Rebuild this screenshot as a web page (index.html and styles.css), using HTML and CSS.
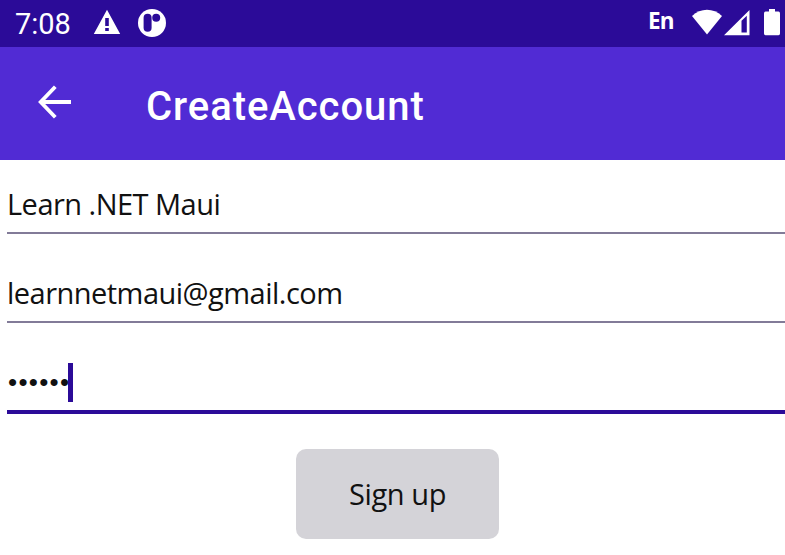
FILE: index.html
```html
<!DOCTYPE html>
<html lang="en">
<head>
<meta charset="utf-8">
<title>CreateAccount</title>
<link rel="stylesheet" href="styles.css">
</head>
<body>
<div class="status">
  <span class="clock">7:08</span>
  <svg class="warn" width="28" height="26" viewBox="0 0 28 26"><path fill="#fff" fill-rule="evenodd" d="M14 0.8 27.2 25H0.8ZM12.2 9V17h3.6V9ZM12.2 19v3h3.6v-3Z"/></svg>
  <svg class="app" width="28" height="28" viewBox="0 0 28 28"><circle cx="14" cy="14" r="14" fill="#fff"/><rect x="5.6" y="4.8" width="8" height="18" rx="4" fill="#2b0b98"/><circle cx="18.2" cy="8.7" r="4" fill="#2b0b98"/></svg>
  <span class="lang">En</span>
  <svg class="wifi" width="30" height="26" viewBox="0 0 30 26"><path fill="#fff" d="M0 7C8.500-1.500 21.500-1.500 30 7L15 25.500Z"/></svg>
  <svg class="signal" width="26" height="26" viewBox="0 0 26 26"><path fill="#fff" fill-rule="evenodd" d="M25.500 0V25.200H0ZM17.500 10.800V22.500H22.800V5.800Z"/></svg>
  <svg class="battery" width="16" height="27" viewBox="0 0 16 27"><path fill="#fff" d="M5 0h6v2.500h3.500Q16 2.500 16 4.500V24.500Q16 26.200 14.500 26.200H1.500Q0 26.200 0 24.500V4.500Q0 2.500 1.500 2.500H5Z"/></svg>
</div>
<header class="bar">
  <svg class="back" width="33" height="34" viewBox="0 0 33 34"><path fill="none" stroke="#fff" stroke-width="3.800" d="M17.300 1.800 2.700 17 17.300 32.200M2.700 17H33"/></svg>
  <h1 class="title">CreateAccount</h1>
</header>
<main class="form">
  <div class="field"><span class="name">Learn .NET Maui</span></div>
  <div class="field email"><span class="mail">learnnetmaui@gmail.com</span></div>
  <div class="field active"><span class="dots">••••••</span><span class="caret"></span></div>
  <button class="signup">Sign up</button>
</main>
</body>
</html>
```
FILE: styles.css
```css
* { box-sizing: border-box; }
body { margin: 0; background: #fff; width: 785px; height: 555px; overflow: hidden; font-family: "Open Sans", sans-serif; color: #111; }
svg { display: block; flex: none; }
.status { display: flex; align-items: flex-start; height: 47px; background: #2b0b98; color: #fff; font-family: Roboto, sans-serif; padding-left: 15px; }
.clock { width: 78px; font-size: 29px; line-height: 34px; margin-top: 7px; white-space: nowrap; }
.warn { margin-top: 9px; }
.app { margin: 9px 0 0 17px; }
.lang { margin: 6px 0 0 482px; width: 44px; font: 700 22.5px/30px "Open Sans", sans-serif; letter-spacing: -0.8px; }
.wifi { margin-top: 9px; }
.signal { margin: 10px 0 0 2px; }
.battery { margin: 9px 0 0 14px; }
.bar { display: flex; height: 113px; background: #512bd4; color: #fff; }
.back { margin: 38px 0 0 38px; }
.title { margin: 36px 0 0 75px; font: 500 40px/47px Roboto, sans-serif; letter-spacing: 0.95px; }
.form { padding-left: 7px; display: flex; flex-direction: column; }
.field { display: flex; height: 74px; border-bottom: 2px solid #827b98; font-size: 29px; line-height: 40px; padding-top: 24px; white-space: nowrap; letter-spacing: -0.52px; }
.email { margin-top: 15px; }
.active { margin-top: 15px; height: 76px; border-bottom: 4px solid #2b0b98; }
.dots { width: 61px; padding-left: 1px; font: 26px/40px "Liberation Sans", sans-serif; letter-spacing: 1.3px; }
.caret { width: 5px; height: 39px; margin-top: 1px; background: #2b0b98; }
.signup { margin: 35px 0 0 289px; width: 203px; height: 90px; padding: 0; border: 0; border-radius: 10px; background: #d4d3d8; color: #111; font: 29px/40px "Open Sans", sans-serif; letter-spacing: -0.4px; }
```
